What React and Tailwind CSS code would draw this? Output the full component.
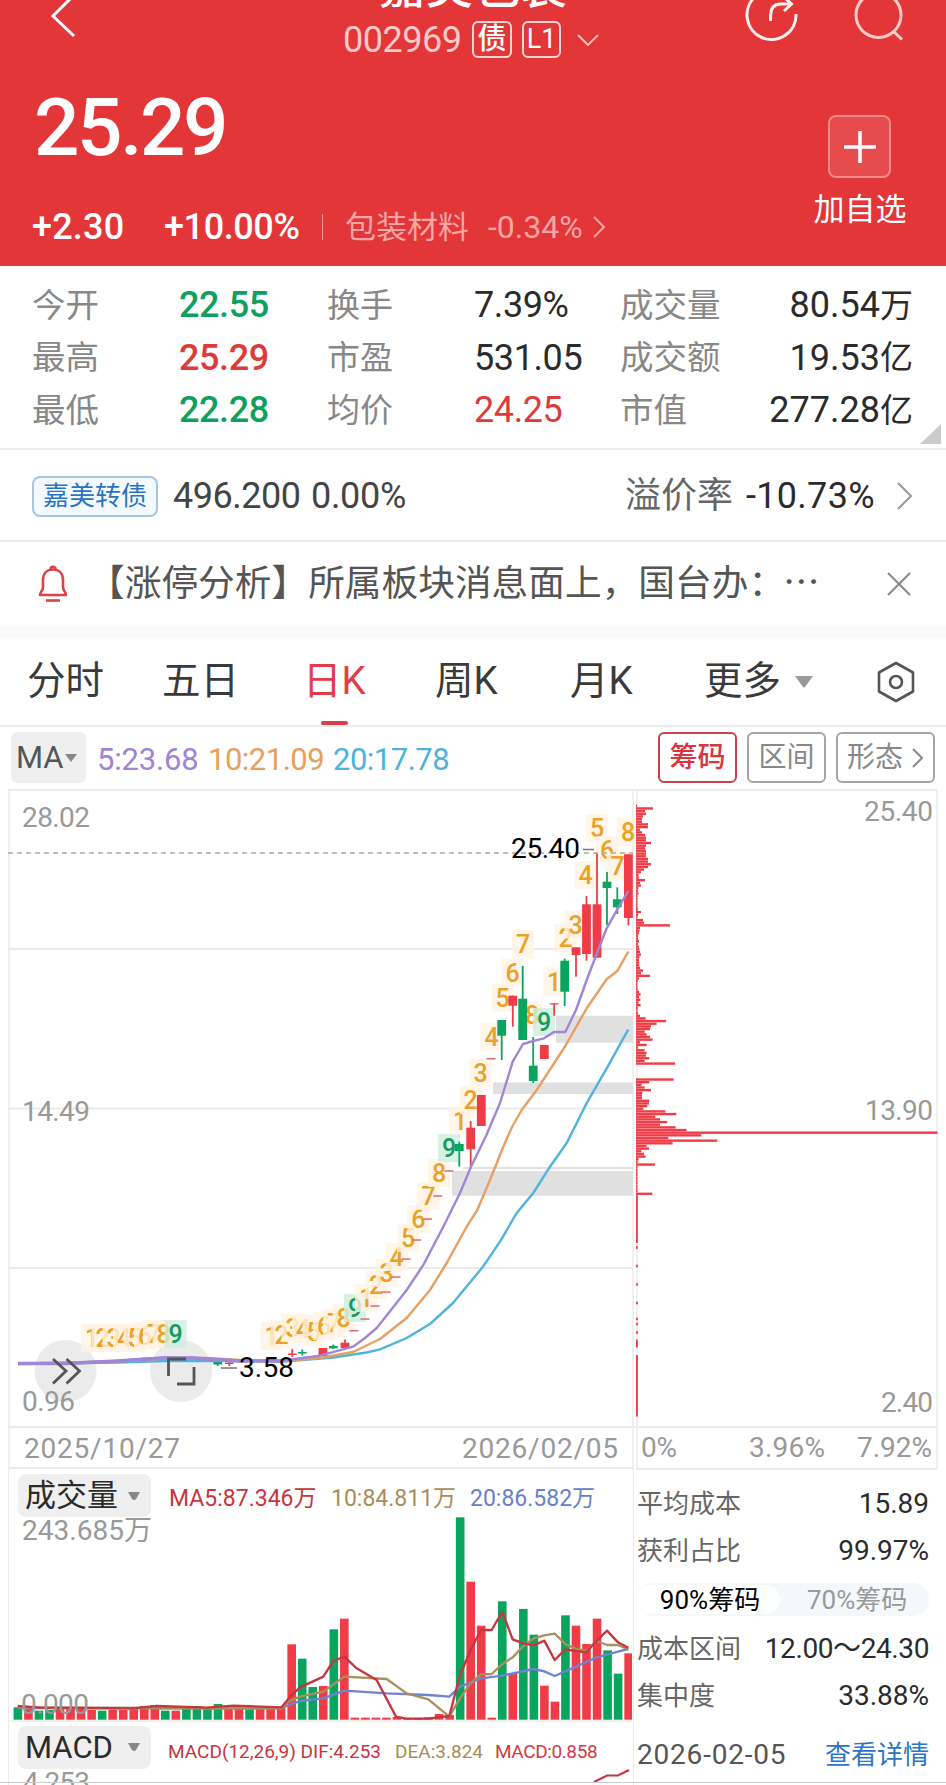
import React from "react";

const RED = "#f03c46";
const GREEN = "#0aa55c";

const stats = [
  ["今开", "22.55", "text-[#0f9f5f]", "换手", "7.39%", "text-[#2b2b2b]", "成交量", "80.54", "万"],
  ["最高", "25.29", "text-[#dd3b3b]", "市盈", "531.05", "text-[#2b2b2b]", "成交额", "19.53", "亿"],
  ["最低", "22.28", "text-[#0f9f5f]", "均价", "24.25", "text-[#dd3b3b]", "市值", "277.28", "亿"],
];

// x, open/close top, bottom, wick top, wick bottom, up?
const candles = [
  [217.7, 1361.7, 1364.5, 1361, 1366, 0],
  [229.3, 1362.5, 1364, 1360, 1366, 1],
  [292.3, 1353.5, 1355, 1349, 1357, 1],
  [302.3, 1352, 1353.5, 1349.5, 1355.5, 0],
  [323, 1348, 1356, 1348, 1356, 1],
  [333.3, 1346, 1348.4, 1344.5, 1349, 0],
  [345, 1342.7, 1348, 1339.5, 1348, 1],
  [459.3, 1144, 1151, 1141.7, 1166.7, 0],
  [470.7, 1127.7, 1149.3, 1121, 1166.7, 1],
  [481.3, 1095, 1126, 1095, 1126, 1],
  [501.7, 1020, 1035.7, 1020, 1060, 0],
  [512.8, 995.7, 1005.7, 995.7, 1026.7, 1],
  [522.7, 998.7, 1040, 966, 1040, 0],
  [533.2, 1065.7, 1081, 1037, 1083, 0],
  [544.3, 1045, 1059, 1045, 1059, 1],
  [554.2, 1003.3, 1004.5, 1003.3, 1015.7, 1],
  [564.7, 960.7, 991.7, 958.7, 1006, 0],
  [576, 947.3, 955, 947.3, 976.7, 1],
  [586.5, 904.3, 954, 896, 960.7, 1],
  [597, 904.3, 957.7, 853.3, 957.7, 1],
  [607, 881.7, 888, 872, 925, 0],
  [617.3, 899.3, 907.3, 887.3, 914, 0],
  [628.4, 854.3, 918, 854.3, 925.3, 1],
];

// days that opened and closed on the limit
const ticks = [
  [354, 1330.7], [365, 1319], [375, 1306], [386, 1292], [396, 1277], [406, 1259],
  [416.7, 1240], [427.5, 1219], [437.7, 1196], [449, 1171], [491, 1058.7],
];

const signals = [
  [92, 1338, 1], [102.5, 1338, 2], [113.5, 1338, 3], [124, 1338, 4], [134.5, 1338, 5], [145, 1336, 6], [154, 1334, 7], [163.5, 1334, 8], [175.5, 1334, 9],
  [271.5, 1336, 1], [281.7, 1335, 2], [292.5, 1328, 3], [303, 1329, 4], [313.5, 1332, 5], [324, 1326, 6], [334, 1323, 7], [343.5, 1318, 8], [355, 1308, 9],
  [366, 1298, 1], [376, 1285, 2], [386.7, 1273, 3], [396.7, 1257, 4], [408, 1238, 5], [418.3, 1219, 6], [428.5, 1196, 7], [439, 1173, 8], [449, 1148, 9],
  [460, 1120.5, 1], [470.5, 1100, 2], [480.5, 1072.5, 3], [491.5, 1036.5, 4], [502.5, 997.5, 5], [512.5, 972.5, 6], [523, 944, 7], [532, 1015, 8], [544, 1022, 9],
  [554, 981.5, 1], [565.5, 938, 2], [575.5, 924.5, 3], [585.7, 875, 4], [597, 828, 5], [607, 850, 6], [617.5, 866, 7], [628, 832, 8],
];

const ma5 = "18,1363.5 66,1363 117,1361 140,1359 165,1357.5 193,1358 240,1361 283,1360.5 320,1355.7 353,1346.7 365,1338 376.7,1328 391,1310 406.7,1290 423.3,1265 443.3,1226.7 460,1193 471,1166.7 486,1136 500,1103 512.7,1061.7 523,1044 533.3,1041 544,1038.3 554,1032 565.3,1032 576,1010 586.7,980 597,953 606.7,928.3 617.3,909.3 628.3,891";
const ma10 = "18,1363.5 117,1361.5 165,1358.5 205,1358 240,1360 283,1361 320,1358 353,1352 380,1339 406.7,1318 430,1290 446.7,1263 466.7,1226.7 477.3,1210 490,1180 503.3,1146.7 512,1127 521.7,1110 536.7,1090 565.3,1046 586.7,1008.3 606.7,979.3 617.3,971 628.3,951.7";
const ma20 = "18,1364 117,1362.5 165,1361 240,1361 283,1361.5 333,1357.5 366.7,1352.5 380,1349.3 406.7,1338 430,1324 453,1303 483,1266.7 500,1241.7 516.7,1213 533.3,1193 550,1166.7 566.7,1143 586.7,1103 606.7,1068.3 628.3,1029.3";

const chips = [
  1, 17, 9, 10, 7, 6, 6, 12, 12, 4, 6, 9, 10, 10, 15, 10, 9, 10, 10, 10, 12, 12, 15, 12, 8, 5, 2.5, 3, 9, 4, 5, 2.3, 2, 2.6,
  1.5, 1.5, 1.5, 1.5, 1.5, 2, 5, 2, 1.5, 7, 8, 34, 4, 3.5, 3, 2, 2, 3, 2, 3, 3.5, 4, 5, 3.5, 3, 3.3, 3.3, 4, 7, 5, 14, 3,
  1.7, 1.5, 1.5, 1.7, 3, 4.6, 3, 4.3, 2.6, 4.6, 1.7, 1.5, 2, 4, 9.6, 30, 20.6, 15, 14, 8.6, 10.6, 14, 16.6, 4, 10.6, 2, 8.6,
  10.6, 10, 13.3, 8.6, 39, 0, 0, 0, 0, 0, 37.6, 13.3, 5.6, 8.6, 15, 6.3, 6, 6, 13.3, 13, 11.3, 7.3, 29.3, 40.3, 19.3, 24,
  31.3, 24, 39.6, 50.6, 301.5, 65.3, 32.3, 81.3, 36.6, 10.6, 13, 5.3, 8, 9.6, 2.6, 1.7, 19, 1.5, 1.5, 1.5, 1.5, 1.5, 1.5,
  1.5, 1.5, 1.5, 1.5, 16.3,
];

const volumes = [
  [742, 0], [742, 1], [752, 0], [750, 0], [745, 1], [745, 1], [745, 1], [750, 1], [752, 0], [750, 1],
  [750, 1], [748, 1], [738, 1], [735, 1], [752, 0], [752, 1], [745, 0], [738, 0], [748, 0], [732, 0],
  [745, 1], [745, 1], [748, 0], [746, 1], [744, 1], [742, 1], [553, 1], [596, 0], [681, 0], [678, 1],
  [508, 0], [476, 1], [773, 1], [773, 1], [773, 1], [773, 1], [771, 1], [774, 1], [774, 1], [772, 1],
  [762, 1], [765, 1], [172, 0], [365, 1], [497, 1], [773, 1], [424, 0], [640, 1], [447, 0], [524, 0],
  [677, 1], [725, 1], [466, 0], [497, 1], [552, 1], [476, 1], [571, 0], [641, 0], [580, 1],
];

const vol5 = "-787,738 -720,743 -440,745 -370,738 -220,743 -140,737 5,742 30,710 60,682 130,650 160,603 193,590 230,625 290,660 348,770 380,776 445,776 508,768 540,645 572,570 603,510 635,510 667,455 698,538 730,550 761,556 793,542 824,600 856,568 888,573 919,577 950,543 981,512 1014,547 1045,563";
const vol10 = "-787,742 5,745 25,725 60,710 130,695 193,650 320,657 380,700 445,718 508,770 540,715 572,670 603,643 635,642 667,612 698,592 730,558 761,535 793,526 824,521 856,552 888,567 919,572 950,543 981,555 1014,555 1045,568";
const vol20 = "-787,744 -200,746 5,744 60,723 130,715 193,692 320,700 445,705 508,710 540,680 603,655 667,647 761,627 793,634 824,648 888,620 950,592 1014,575 1045,567";

function Label({ x, y, w, size = 28, fill = "#999", children, ...rest }) {
  return (
    <text x={x} y={y} fontSize={size} fill={fill} textLength={w} {...rest}>
      {children}
    </text>
  );
}

function Header() {
  return (
    <header className="h-[266px] bg-[#e33639] text-white overflow-hidden">
      <div className="flex h-[66px] items-start">
        <svg className="w-[343px] h-[66px] shrink-0" viewBox="0 0 343 66" fill="none" stroke="white" strokeWidth="3">
          <path d="M74 -5 L53 16 L74 36" />
        </svg>
        <div className="w-[260px] shrink-0">
          <div className="-mt-[36px] h-[46px] text-[47px] leading-[46px] font-medium text-center whitespace-nowrap">嘉美包装</div>
          <div className="mt-[11px] flex h-[37px] items-center">
            <span className="w-[129px] text-[36px] leading-none tracking-[-0.5px] text-[#ffc9c9]">002969</span>
            <span className="flex h-[37px] w-[40px] items-center justify-center rounded-md border-2 border-[#ffd6d6] text-[29px] leading-none font-medium">债</span>
            <span className="ml-[10px] flex h-[37px] w-[39px] items-center justify-center rounded-md border-2 border-[#ffd6d6] text-[27px] leading-none">L1</span>
            <svg className="ml-[16px] h-3 w-[22px]" viewBox="0 0 22 12" fill="none" stroke="#ffb9b9" strokeWidth="2">
              <path d="M1 1 L11 11 L21 1" />
            </svg>
          </div>
        </div>
        <svg className="h-[66px] w-[343px] shrink-0" viewBox="603 0 343 66" fill="none" stroke="#fff0f0" strokeWidth="3">
          <path d="M756 -4 A24.5 24.5 0 1 0 796 14" />
          <path d="M770.5 21 V16 C770.5 8 774 4 781 4 H791 M784 -3 L791.5 4 L784 11" />
          <circle cx="878.5" cy="15" r="22.5" stroke="#ffcaca" />
          <path d="M893 31 L902 39.5" stroke="#ffcaca" />
        </svg>
      </div>
      <div className="flex justify-between">
        <div>
          <div className="mt-[21px] ml-[34px] h-[82px] text-[80px] leading-[82px] font-medium tracking-[-2.4px]">25.29</div>
          <div className="mt-[38px] flex h-[40px] items-center leading-none whitespace-nowrap">
            <span className="ml-[32px] w-[132px] text-[36px] font-medium tracking-[0.2px]">+2.30</span>
            <span className="w-[158px] text-[36px] font-medium tracking-[-0.4px]">+10.00%</span>
            <span className="h-[26px] w-px bg-[#f59a9a]" />
            <span className="ml-[22px] w-[143px] text-[31px] text-[#f9a5a5]">包装材料</span>
            <span className="text-[32px] text-[#f9a5a5]">-0.34%</span>
            <svg className="ml-[9px] h-6 w-[14px]" viewBox="0 0 14 24" fill="none" stroke="#f9a5a5" strokeWidth="2">
              <path d="M2 2 L12 12 L2 22" />
            </svg>
          </div>
        </div>
        <div className="mr-[39px] mt-[49px] flex w-[94px] flex-col items-center">
          <div className="flex h-[63px] w-[63px] items-center justify-center rounded-lg border-2 border-[#f08a8a] bg-[#e64b4e] ml-[-1px]">
            <svg className="h-8 w-8" viewBox="0 0 32 32" stroke="white" strokeWidth="3.5">
              <path d="M16 0 V32 M0 16 H32" />
            </svg>
          </div>
          <div className="mt-[14px] text-[31px] leading-[36px] whitespace-nowrap">加自选</div>
        </div>
      </div>
    </header>
  );
}

function Stats() {
  return (
    <section className="relative h-[184px] border-b-2 border-[#ececec] pt-[13px] pl-[32px] pr-[33px]">
      {stats.map((s) => (
        <div key={s[0]} className="flex h-[52.5px] items-center whitespace-nowrap text-[36px] leading-none tracking-[-0.4px]">
          <span className="w-[147px] text-[33.5px] tracking-normal text-[#888]">{s[0]}</span>
          <span className={"w-[148px] font-medium " + s[2]}>{s[1]}</span>
          <span className="w-[147px] text-[33px] tracking-normal text-[#888]">{s[3]}</span>
          <span className={"w-[146px] " + s[5]}>{s[4]}</span>
          <span className="text-[33.5px] tracking-normal text-[#888]">{s[6]}</span>
          <span className="ml-auto flex items-center text-[#2b2b2b] tracking-[0px]">
            {s[7]}
            <span className="text-[33px]">{s[8]}</span>
          </span>
        </div>
      ))}
      <svg className="absolute right-[5px] bottom-[4px] h-5 w-[21px]" viewBox="0 0 21 20" fill="#ccc">
        <path d="M21 0 V20 H0 Z" />
      </svg>
    </section>
  );
}

function BondRow() {
  return (
    <section className="flex h-[92px] items-center border-b-2 border-[#ececec] pt-[2px] pl-[32px] pr-[33px] whitespace-nowrap text-[36px] leading-none text-[#444]">
      <span className="flex h-[41px] w-[126px] items-center justify-center rounded-lg border-2 border-[#a9c5e6] bg-[#f3faff] text-[26px] text-[#2b74c4]">嘉美转债</span>
      <span className="ml-[15px] w-[138px] tracking-[-0.5px]">496.200</span>
      <span className="tracking-[-0.3px]">0.00%</span>
      <span className="ml-auto text-[36px] text-[#666]">溢价率</span>
      <span className="ml-[13px] w-[151px] tracking-[0.3px] text-[#2b2b2b]">-10.73%</span>
      <svg className="h-7 w-[16px]" viewBox="0 0 16 28" fill="none" stroke="#999" strokeWidth="2">
        <path d="M1 1 L14 14 L1 27" />
      </svg>
    </section>
  );
}

function NewsRow() {
  return (
    <section className="flex h-[84px] items-center pl-[38px] pr-[35px]">
      <svg className="h-[38px] w-[30px]" viewBox="0 0 30 38" fill="none" stroke="#df4149" strokeWidth="2.6" strokeLinejoin="round">
        <path d="M2 30 C2 27 5 26 5 22 V15 C5 8.5 9 4.5 15 4.5 C21 4.5 25 8.5 25 15 V22 C25 26 28 27 28 30 Z M12.5 4 C12.5 1 17.5 1 17.5 4" />
        <path d="M8 35.5 H22" />
      </svg>
      <span className="ml-[20px] whitespace-nowrap text-[36.7px] leading-none text-[#555]">
        【涨停分析】所属板块消息面上，国台办：<span className="-ml-[2px]">⋯</span>
      </span>
      <svg className="ml-auto h-6 w-6" viewBox="0 0 24 24" stroke="#888" strokeWidth="2">
        <path d="M1 1 L23 23 M23 1 L1 23" />
      </svg>
    </section>
  );
}

function Tabs() {
  return (
    <nav className="flex h-[89px] items-center border-b-2 border-[#ececec] pl-[27px] whitespace-nowrap text-[38.5px] leading-none text-[#3a3a3a]">
      <span className="w-[135px]">分时</span>
      <span className="w-[141px]">五日</span>
      <span className="relative w-[132px] text-[#e33c48]">
        日K
        <span className="absolute left-[18px] top-[59px] h-[4px] w-[27px] rounded-sm bg-[#d8404a]" />
      </span>
      <span className="w-[135px]">周K</span>
      <span className="w-[134px]">月K</span>
      <span>更多</span>
      <svg className="ml-[13px] h-3 w-[20px]" viewBox="0 0 20 12" fill="#999">
        <path d="M1 0 H19 L11 11 Q10 12 9 11 Z" />
      </svg>
      <svg className="ml-[62px] h-[42px] w-[40px]" viewBox="0 0 40 42" fill="none" stroke="#555" strokeWidth="2.6" strokeLinejoin="round">
        <path d="M20 2 L37 11.5 V30.5 L20 40 L3 30.5 V11.5 Z" />
        <circle cx="20" cy="21" r="6" />
      </svg>
    </nav>
  );
}

function MaBar() {
  return (
    <div className="flex h-[62px] items-center pb-px pl-[11px] pr-[11px] whitespace-nowrap text-[31px] leading-none">
      <span className="flex h-[51px] w-[75px] items-center rounded-md bg-[#efefef] pl-[5px] text-[31px] text-[#555]">
        MA
        <svg className="ml-px h-2 w-3" viewBox="0 0 12 8" fill="#888"><path d="M0 0 H12 L6 8 Z" /></svg>
      </span>
      <span className="ml-[11px] mt-[3px] w-[111px] tracking-[-0.2px] text-[#a084d6]">5:23.68</span>
      <span className="mt-[3px] w-[125px] tracking-[-0.5px] text-[#e8a05c]">10:21.09</span>
      <span className="mt-[3px] tracking-[-0.5px] text-[#4db3dc]">20:17.78</span>
      <span className="ml-auto flex h-[51px] w-[79px] items-center justify-center rounded-md border-2 border-[#c9414c] text-[28px] font-medium text-[#d93440]">筹码</span>
      <span className="ml-[10px] flex h-[51px] w-[79px] items-center justify-center rounded-md border-2 border-[#a5a5a5] text-[28px] text-[#888]">区间</span>
      <span className="ml-[10px] flex h-[51px] w-[99px] items-center rounded-md border-2 border-[#a5a5a5] pl-[9px] text-[28px] text-[#888]">
        形态
        <svg className="ml-[9px] h-5 w-3" viewBox="0 0 12 20" fill="none" stroke="#888" strokeWidth="2"><path d="M1 1 L10 10 L1 19" /></svg>
      </span>
    </div>
  );
}

function KChart() {
  return (
    <svg className="block h-[681px] w-[946px]" viewBox="0 789 946 681">
      <g stroke="#ebebeb" strokeWidth="2" fill="none">
        <path d="M8 790 H937 M8 949 H633 M8 1108.5 H633 M8 1268 H633 M8 1427 H937 M8 1468 H633 M636 1469 H937" />
        <path d="M9 790 V1470 M633 790 V1470 M637 790 V1470 M937 790 V1470" strokeWidth="1.5" />
      </g>
      <g fill="#e0e0e0">
        <rect x="556" y="1015.7" width="77" height="27" />
        <rect x="493" y="1082.5" width="140" height="11.5" />
        <rect x="463" y="1167" width="170" height="2.2" />
        <rect x="452" y="1171" width="181" height="24.7" />
      </g>
      <Label x="22" y="827" w="68">28.02</Label>
      <Label x="22" y="1121" w="68">14.49</Label>
      <circle cx="65.5" cy="1371" r="31" fill="#ebebeb" />
      <circle cx="181" cy="1371" r="31" fill="#ebebeb" />
      <Label x="22" y="1411" w="53">0.96</Label>

      {signals.map(([x, y, n], i) => (
        <g key={i}>
          <rect x={x - 11} y={y - 14} width="22" height="28" fill={n === 9 ? "#cdeedd" : "#fff3e2"} opacity="0.8" />
          <text x={x} y={y + 9} fontSize="25" textAnchor="middle" fontWeight="500" fill={n === 9 ? "#139c5c" : "#eaa126"}>{n}</text>
        </g>
      ))}

      {candles.map(([x, top, bottom, hi, lo, up]) => (
        <g key={x} fill={up ? RED : GREEN}>
          <rect x={x - 0.9} y={hi} width="1.8" height={lo - hi} />
          <rect x={x - 4.4} y={top} width="8.8" height={bottom - top} />
        </g>
      ))}
      {ticks.map(([x, y]) => (
        <rect key={x} x={x - 4.5} y={y - 0.7} width="9" height="1.5" fill="#dc6b78" />
      ))}

      <path d="M8 853 H633" stroke="#b5aa93" strokeWidth="1.5" strokeDasharray="5 4" />
      <g fill="none" strokeWidth="2.4" strokeLinejoin="round">
        <polyline points={ma20} stroke="#4fb3dd" />
        <polyline points={ma10} stroke="#e6a064" />
        <polyline points={ma5} stroke="#9f86d6" />
      </g>
      <path d="M18 1363.5 H66 L117 1361 L165 1358 H193 L240 1361 H283" fill="none" stroke="#9f86d6" strokeWidth="3.5" />
      <path d="M583 849.5 H594 M221 1368 H237" stroke="#777" strokeWidth="1.6" />
      <Label x="511" y="857.5" w="69" fill="#000">25.40</Label>
      <Label x="239" y="1376.5" w="55" fill="#000">3.58</Label>

      <g fill="none" stroke="#555" strokeWidth="2.8">
        <path d="M53 1359 L66 1371 L53 1383.5 M66.5 1359 L79.5 1371 L66.5 1383.5" />
        <path d="M168.5 1376 V1359 H186 M194 1367 V1384 H177" />
      </g>

      <g fill={RED}>
        {chips.map((w, i) => (
          <rect key={i} x="636" y={804.6 + i * 2.6575} width={w} height={w ? 2.4 : 0} />
        ))}
        <rect x="636" y="1195" width="1.8" height="48" />
        {[1247.5, 1266, 1284.5, 1303, 1319, 1324, 1332.5].map((y) => (
          <rect key={y} x="636" y={y - 1.3} width="1.8" height="2.6" />
        ))}
        <rect x="636" y="1339.5" width="1.8" height="8" />
        <rect x="636" y="1355" width="1.9" height="61.5" />
      </g>

      <Label x="864" y="821" w="69">25.40</Label>
      <Label x="865" y="1120" w="68">13.90</Label>
      <Label x="881" y="1412" w="52">2.40</Label>
      <Label x="24" y="1458" w="156">2025/10/27</Label>
      <Label x="462" y="1458" w="156">2026/02/05</Label>
      <Label x="641" y="1457" w="36">0%</Label>
      <Label x="749" y="1457" w="76">3.96%</Label>
      <Label x="857" y="1457" w="75">7.92%</Label>
    </svg>
  );
}

function Pill({ children }) {
  return (
    <span className="flex h-[43px] w-[133px] shrink-0 items-center justify-between rounded-lg bg-[#efefef] pl-[7px] pr-[11px] text-[31px] text-[#2b2b2b]">
      {children}
      <svg className="h-2 w-3" viewBox="0 0 12 8" fill="#888"><path d="M0 0 H12 L8 7 Q6 9 4 7 Z" /></svg>
    </span>
  );
}

function VolumePanel() {
  return (
    <div className="w-[626px] border-x-[1.5px] border-[#ebebeb]">
      <div className="flex h-[47px] items-end pl-[9px] whitespace-nowrap leading-none">
        <Pill>成交量</Pill>
        <div className="flex h-[43px] items-center pt-[5px] text-[23px] tracking-[0px]">
          <span className="ml-[18px] w-[162px] text-[#c9343c]">MA5:87.346万</span>
          <span className="w-[139px] text-[#a98d58]">10:84.811万</span>
          <span className="text-[#6680cc]">20:86.582万</span>
        </div>
      </div>
      <svg className="block h-[208px] w-[623px]" viewBox="9 1517 623 208">
        <Label x="22" y="1540" w="130">243.685万</Label>
        {volumes.map(([top, up], i) => {
          const y = 1460 + top / 3;
          return <rect key={i} x={13.6 + i * 10.53} y={y} width="8.6" height={1719.7 - y} fill={up ? RED : GREEN} />;
        })}
        <g transform="translate(280 1460) scale(0.33333)" fill="none" strokeWidth="7" strokeLinejoin="round">
          <polyline points={vol20} stroke="#7082d2" />
          <polyline points={vol10} stroke="#a8905e" />
          <polyline points={vol5} stroke="#c63640" />
        </g>
        <Label x="21" y="1714" w="68">0.000</Label>
        <path d="M9 1721 H633" stroke="#ebebeb" strokeWidth="1.5" />
      </svg>
      <div className="flex h-[44px] items-center pl-[9px] whitespace-nowrap text-[19px] leading-none tracking-[0px]">
        <Pill>MACD</Pill>
        <span className="mt-[8px] ml-[17px] w-[227px] text-[#c9343c]">MACD(12,26,9) DIF:4.253</span>
        <span className="mt-[8px] w-[100px] text-[#a98d58]">DEA:3.824</span>
        <span className="mt-[8px] tracking-[-0.4px] text-[#d3394a]">MACD:0.858</span>
      </div>
      <svg className="block h-[16px] w-[623px]" viewBox="9 1769 623 16">
        <Label x="23" y="1792" w="67">4.253</Label>
        <path d="M594 1782 L607 1775.5 H618 L629 1770" fill="none" stroke="#c63640" strokeWidth="2.2" />
      </svg>
    </div>
  );
}

function CostRow({ label, value, tight }) {
  return (
    <div className="flex h-[47px] items-center justify-between">
      <span className="text-[26px] text-[#666]">{label}</span>
      <span className={"text-[28px] text-[#2b2b2b] " + (tight ? "tracking-[-0.4px]" : "")}>{value}</span>
    </div>
  );
}

function CostPanel() {
  return (
    <div className="ml-[3px] w-[292px] whitespace-nowrap leading-none pt-[10px]">
      <CostRow label="平均成本" value="15.89" />
      <CostRow label="获利占比" value="99.97%" />
      <div className="mt-[9px] mb-[9px] flex h-[33px] items-center rounded-full bg-[#f4f8fb] text-[26px] text-[#999]">
        <span className="flex h-[29px] w-[143px] items-center justify-center rounded-full bg-white pl-[3px] text-black">90%筹码</span>
        <span className="ml-[27px]">70%筹码</span>
      </div>
      <CostRow label="成本区间" value="12.00～24.30" tight />
      <CostRow label="集中度" value="33.88%" />
      <div className="mt-[12px] flex h-[47px] items-center justify-between">
        <span className="text-[28px] tracking-[0.8px] text-[#555]">2026-02-05</span>
        <span className="text-[26px] text-[#2a76c6]">查看详情</span>
      </div>
    </div>
  );
}

export default function App() {
  return (
    <div className="h-[1785px] w-[946px] overflow-hidden bg-white font-['Roboto','Noto_Sans_CJK_SC',sans-serif]">
      <Header />
      <Stats />
      <BondRow />
      <NewsRow />
      <div className="h-[12px] bg-[#fafafa]" />
      <Tabs />
      <MaBar />
      <KChart />
      <div className="relative flex h-[315px] pl-[8px]">
        <VolumePanel />
        <CostPanel />
        <div className="absolute inset-x-0 bottom-[2px] h-[1.5px] bg-[#ccc]" />
      </div>
    </div>
  );
}
